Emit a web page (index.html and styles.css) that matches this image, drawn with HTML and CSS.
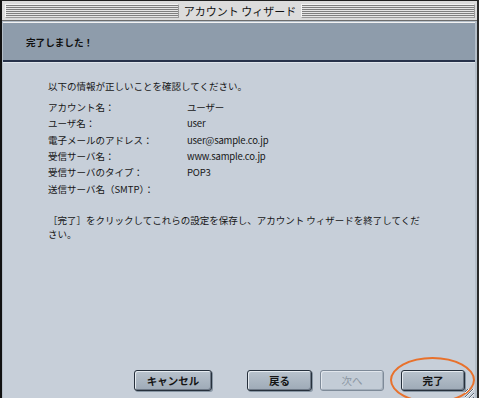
FILE: index.html
```html
<!doctype html>
<html lang="ja">

<head>
    <meta charset="UTF-8" />
    <meta name="viewport" content="width=device-width, initial-scale=1.0" />
    <title>アカウント ウィザード</title>
    <link rel="stylesheet" href="styles.css">
</head>

<body>
    <div class="window">
        <!-- barra de titulo -->
        <div class="titlebar">
            <div class="stripes"></div>
            <div class="title">アカウント ウィザード</div>
            <div class="stripes"></div>
        </div>

        <div class="banner">完了しました！</div>

        <div class="pane">
            <p class="intro">以下の情報が正しいことを確認してください。</p>
            <dl class="summary">
                <dt>アカウント名：</dt>
                <dd>ユーザー</dd>
                <dt>ユーザ名：</dt>
                <dd>user</dd>
                <dt>電子メールのアドレス：</dt>
                <dd>user@sample.co.jp</dd>
                <dt>受信サーバ名：</dt>
                <dd>www.sample.co.jp</dd>
                <dt>受信サーバのタイプ：</dt>
                <dd>POP3</dd>
                <dt>送信サーバ名（SMTP）：</dt>
                <dd></dd>
            </dl>
            <p class="note">［完了］をクリックしてこれらの設定を保存し、アカウント ウィザードを終了してください。</p>

            <div class="actions">
                <button type="button" class="btn btn-cancel">キャンセル</button>
                <button type="button" class="btn btn-back">戻る</button>
                <button type="button" class="btn btn-next" disabled>次へ</button>
                <span class="highlight"><button type="submit" class="btn btn-finish">完了</button></span>
            </div>

            <span class="grip"></span>
        </div>
    </div>
</body>

</html>
```

FILE: styles.css
```css
*,
*::before,
*::after {
    box-sizing: border-box;
}

body {
    margin: 0;
    background: #ffffff;
    font-family: "Noto Sans CJK JP", "Noto Sans", sans-serif;
    color: #161616;
    overflow: hidden;
}

.window {
    width: 479px;
    height: 398px;
    border-top: 1px solid #202020;
    border-left: 2px solid #111111;
    border-right: 2px solid #2a2a2a;
    background: #b4bec8;
    display: flex;
    flex-direction: column;
}

.titlebar {
    height: 20px;
    display: flex;
    align-items: center;
    padding: 0 2px 0 3px;
    background: #dcdcdc;
    border-bottom: 1px solid #6c6c6c;
}

.stripes {
    flex: 1;
    height: 14px;
    border: 1px solid #f4f4f4;
    border-right-color: #9a9a9a;
    border-bottom-color: #9a9a9a;
    background: repeating-linear-gradient(to bottom, #7f7f7f 0, #7f7f7f 1px, #e6e6e6 1px, #e6e6e6 2px);
}

.title {
    padding: 0 5px;
    font-size: 11px;
    line-height: 14px;
    color: #111111;
}

.banner {
    height: 40px;
    margin: 1px 2px 0 1px;
    padding-left: 23px;
    display: flex;
    align-items: center;
    background: #8e9cab;
    border-top: 1px solid #f2f2f2;
    border-bottom: 2px solid #27324a;
    font-size: 9.6px;
    font-weight: bold;
    color: #101010;
}

.pane {
    flex: 1;
    position: relative;
    margin: 0 2px 0 1px;
    padding: 15px 0 7px 45px;
    display: flex;
    flex-direction: column;
    background: #c7cfd9;
    border-top: 1px solid #dfe5eb;
    font-size: 9.5px;
}

.intro {
    margin: 0 0 5px 0;
    line-height: 16px;
}

.summary {
    margin: 0;
    display: grid;
    grid-template-columns: 139px 1fr;
    grid-auto-rows: 16.3px;
    align-items: center;
}

.summary dt,
.summary dd {
    margin: 0;
}

.summary dd {
    letter-spacing: -0.2px;
}

.note {
    width: 378px;
    margin: 16px 0 0 0;
    line-height: 14.5px;
}

.actions {
    margin-top: auto;
    display: flex;
    align-items: center;
    padding-left: 86px;
}

.btn {
    height: 21px;
    padding: 0;
    font-family: inherit;
    font-size: 10.5px;
    font-weight: bold;
    color: #141414;
    border: 1px solid #26303c;
    border-radius: 3px;
    background: linear-gradient(to bottom, #b9c3cd, #9eaab7);
    box-shadow: inset 1px 1px 0 #e6ebf0, inset -1px -1px 0 #6d7886, 1px 1px 0 #8795a3;
}

.btn-cancel {
    width: 78px;
}

.btn-back {
    width: 65px;
    margin-left: 35px;
}

.btn-next {
    width: 64px;
    margin-left: 8px;
    color: #8c97a3;
    font-weight: normal;
    border-color: #7e8a98;
    background: #c3ccd6;
    box-shadow: inset 1px 1px 0 #e2e7ed, inset -1px -1px 0 #a4afbb;
}

.highlight {
    position: relative;
    margin-left: 17px;
    display: flex;
}

.highlight::after {
    content: "";
    position: absolute;
    left: -11px;
    top: -13px;
    width: 85px;
    height: 46px;
    border: 2px solid #e8712c;
    border-radius: 50%;
}

.btn-finish {
    width: 64px;
}

.grip {
    position: absolute;
    right: 1px;
    bottom: 0;
    width: 9px;
    height: 9px;
    background: repeating-linear-gradient(135deg, transparent 0, transparent 1.5px, #5d6875 1.5px, #5d6875 2.5px, #f2f4f6 2.5px, #f2f4f6 3.5px);
}
```
